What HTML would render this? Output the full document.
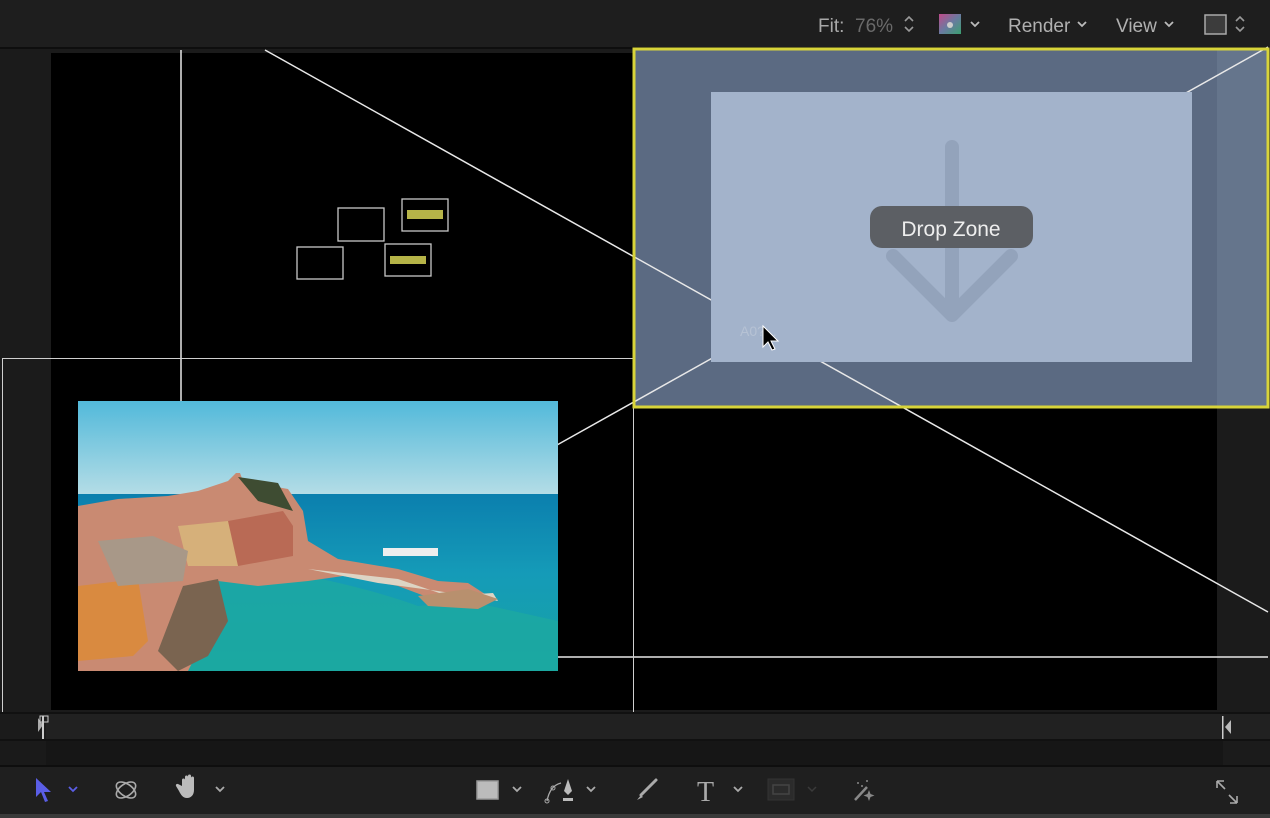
<!DOCTYPE html>
<html><head><meta charset="utf-8"><style>
html,body{margin:0;padding:0;background:#1e1e1e;width:1270px;height:818px;overflow:hidden;font-family:"Liberation Sans",sans-serif}
</style></head><body>
<svg width="1270" height="818" viewBox="0 0 1270 818" xmlns="http://www.w3.org/2000/svg" style="position:absolute;left:0;top:0">
<defs>
<linearGradient id="sky" x1="0" y1="0" x2="0" y2="1"><stop offset="0" stop-color="#52b9da"/><stop offset="1" stop-color="#b5dde6"/></linearGradient>
<linearGradient id="sea" x1="0" y1="0" x2="0" y2="1"><stop offset="0" stop-color="#0b7fae"/><stop offset="0.45" stop-color="#159bb8"/><stop offset="1" stop-color="#16a3a3"/></linearGradient>
<linearGradient id="pal" x1="0" y1="0" x2="1" y2="1"><stop offset="0" stop-color="#c04a8a"/><stop offset="0.5" stop-color="#6a7aa0"/><stop offset="1" stop-color="#3aa070"/></linearGradient>
</defs>
<rect x="0" y="0" width="1270" height="47" fill="#1e1e1e"/>
<rect x="0" y="47" width="1270" height="2" fill="#0e0e0e"/>
<text x="818" y="32" font-size="19" fill="#a8a8a8">Fit:</text>
<text x="855" y="32" font-size="19" fill="#6a6a6a">76%</text>
<path d="M905 21l4-4 4 4M905 27l4 4 4-4" stroke="#999" stroke-width="1.6" fill="none"/>
<rect x="939" y="14" width="22" height="20" fill="url(#pal)"/>
<circle cx="950" cy="25" r="3" fill="#ccc"/>
<path d="M971 22l4 4 4-4" stroke="#bbb" stroke-width="1.8" fill="none"/>
<text x="1008" y="32" font-size="19" fill="#b0b0b0">Render</text>
<path d="M1078 22l4 4 4-4" stroke="#bbb" stroke-width="1.8" fill="none"/>
<text x="1116" y="32" font-size="19" fill="#b0b0b0">View</text>
<path d="M1165 22l4 4 4-4" stroke="#bbb" stroke-width="1.8" fill="none"/>
<rect x="1205" y="15" width="21" height="19" fill="#3c3c3c" stroke="#aaa" stroke-width="1.5"/>
<path d="M1236 21l4-4 4 4M1236 27l4 4 4-4" stroke="#999" stroke-width="1.6" fill="none"/>
<rect x="0" y="49" width="1270" height="663" fill="#1b1b1b"/>
<rect x="51" y="53" width="1166" height="657" fill="#000"/>
<rect x="634" y="49" width="634" height="358" fill="#5b6a82"/>
<rect x="1217" y="49" width="51" height="358" fill="#65758c"/>
<g stroke="#e8e8e8" stroke-width="1.5" fill="none">
<line x1="181" y1="50" x2="181" y2="401"/>
<line x1="265" y1="50" x2="1268" y2="612"/>
<line x1="557" y1="445" x2="1268" y2="47"/>
<line x1="557" y1="657" x2="1268" y2="657"/>
</g>
<rect x="2.5" y="358.5" width="631" height="354" fill="none" stroke="#cfcfcf" stroke-width="1"/>
<rect x="634" y="49" width="634" height="358" fill="none" stroke="#d8d43a" stroke-width="3"/>
<rect x="711" y="92" width="481" height="270" fill="#a3b3cb"/>
<path d="M952 147V312M893 256l59 59 59-59" stroke="#93a3bb" stroke-width="14" stroke-linecap="round" stroke-linejoin="round" fill="none"/>
<rect x="870" y="206" width="163" height="42" rx="12" fill="#5c5f64"/>
<text x="951" y="236" font-size="21" fill="#eee" text-anchor="middle">Drop Zone</text>
<text x="740" y="336" font-size="14" fill="#b6c2d4">A0?...</text>
<path d="M763 326v21l5-5 4 8 3-1-4-8h7z" fill="#000" stroke="#fff" stroke-width="1"/>
<g fill="none" stroke="#c8c8c8" stroke-width="1.3">
<rect x="338" y="208" width="46" height="33"/>
<rect x="402" y="199" width="46" height="32"/>
<rect x="385" y="244" width="46" height="32"/>
<rect x="297" y="247" width="46" height="32"/>
</g>
<rect x="407" y="210" width="36" height="9" fill="#b6b448"/>
<rect x="390" y="256" width="36" height="8" fill="#b6b448"/>
<svg x="78" y="401" width="480" height="270" viewBox="0 0 480 270">
<rect width="480" height="94" fill="url(#sky)"/>
<rect y="93" width="480" height="177" fill="url(#sea)"/>
<path d="M110 175 Q170 165 230 175 Q300 190 340 205 L390 200 L480 220 L480 270 L100 270Z" fill="#1daaa0" opacity="0.75"/>
<path d="M0 105 L40 98 L90 95 L120 90 L150 80 L158 72 L162 72 L165 80 L210 88 L225 110 L230 140 L260 158 L320 168 L360 180 L390 182 L410 195 L400 205 L360 200 L320 185 L265 175 L230 180 L180 185 L140 180 L130 210 L125 240 L110 270 L0 270Z" fill="#c98a72"/>
<path d="M150 120 L205 110 L215 125 L215 155 L160 165 L150 140Z" fill="#b96a55"/>
<path d="M100 125 L150 120 L160 165 L110 165Z" fill="#d6b07a"/>
<path d="M0 185 L60 178 L70 240 L55 255 L0 260Z" fill="#d98a40"/>
<path d="M20 140 L75 135 L110 150 L105 180 L40 185Z" fill="#a89888"/>
<path d="M160 76 L200 82 L215 110 L180 100Z" fill="#3e4c32"/>
<path d="M105 185 L140 178 L150 220 L130 255 L100 270 L80 250Z" fill="#7a6450"/>
<path d="M230 168 L320 178 L370 195 L415 192 L420 200 L360 190 L300 182Z" fill="#ddd4c4"/>
<path d="M340 195 L390 188 L420 198 L400 208 L350 205Z" fill="#b8906e"/>
<rect x="305" y="147" width="55" height="8" fill="#eee"/>
</svg>
<rect x="0" y="712" width="1270" height="2" fill="#111"/>
<rect x="0" y="714" width="1270" height="25" fill="#212121"/>
<rect x="0" y="714" width="46" height="25" fill="#1b1b1b"/>
<rect x="0" y="739" width="1270" height="2" fill="#111"/>
<rect x="0" y="741" width="1270" height="24" fill="#161616"/>
<rect x="0" y="741" width="46" height="24" fill="#1a1a1a"/>
<rect x="1223" y="741" width="47" height="24" fill="#1b1b1b"/>
<path d="M38 718l5 7-5 7z" fill="#aaa"/>
<rect x="42" y="716" width="2" height="23" fill="#ccc"/>
<rect x="40" y="716" width="8" height="6" fill="none" stroke="#ccc" stroke-width="1"/>
<rect x="1222" y="716" width="1.5" height="23" fill="#ccc"/>
<path d="M1231 720l-6 7 6 7z" fill="#bbb"/>
<rect x="0" y="765" width="1270" height="2" fill="#0e0e0e"/>
<rect x="0" y="767" width="1270" height="47" fill="#1f1f1f"/>
<rect x="0" y="814" width="1270" height="4" fill="#3a3a3a"/>
<path d="M36 778l0 19 5-5 4 10 3-1-4-9 7 0z" fill="#5a5ee6"/>
<path d="M69 787l4 4 4-4" stroke="#5a5ee6" stroke-width="1.8" fill="none"/>
<g stroke="#aaa" stroke-width="1.6" fill="none"><ellipse cx="126" cy="790" rx="11" ry="6" transform="rotate(-35 126 790)"/><ellipse cx="126" cy="790" rx="11" ry="6" transform="rotate(35 126 790)"/></g>
<path d="M182 786l0-6a1.5 1.5 0 013 0v8l0-11a1.5 1.5 0 013 0v10l0-11a1.5 1.5 0 013 0v11l0-9a1.5 1.5 0 013 0v12c0 5-3 8-7 8s-6-3-8-7l-3-5a1.5 1.5 0 012-2z" fill="#bbb"/>
<path d="M216 787l4 4 4-4" stroke="#aaa" stroke-width="1.8" fill="none"/>
<rect x="477" y="781" width="21" height="18" fill="#bbb" stroke="#999" stroke-width="1.5"/>
<path d="M513 787l4 4 4-4" stroke="#aaa" stroke-width="1.8" fill="none"/>
<path d="M547 801c2-10 6-16 14-18" stroke="#aaa" stroke-width="1.3" fill="none"/>
<circle cx="547" cy="801" r="2" fill="none" stroke="#aaa"/><circle cx="553" cy="788" r="2" fill="none" stroke="#aaa"/>
<path d="M568 779l-4 12 4 4 4-4z M563 798h10v3h-10z" fill="#bbb"/>
<path d="M587 787l4 4 4-4" stroke="#aaa" stroke-width="1.8" fill="none"/>
<path d="M656 780l-15 15" stroke="#aaa" stroke-width="3" stroke-linecap="round"/>
<path d="M637 800l4-5 2 2z" fill="#aaa"/>
<text x="697" y="801" font-size="28" font-family="Liberation Serif,serif" fill="#aaa">T</text>
<path d="M734 787l4 4 4-4" stroke="#aaa" stroke-width="1.8" fill="none"/>
<rect x="768" y="779" width="26" height="21" fill="#2b2b2b" stroke="#333" stroke-width="1"/>
<rect x="773" y="785" width="16" height="9" fill="none" stroke="#444" stroke-width="1.5"/>
<path d="M808 787l4 4 4-4" stroke="#3a3a3a" stroke-width="1.5" fill="none"/>
<path d="M855 800l12-13" stroke="#888" stroke-width="2.5"/>
<path d="M869 790l1.5 4 4 1.5-4 1.5-1.5 4-1.5-4-4-1.5 4-1.5z" fill="#888"/>
<circle cx="858" cy="783" r="1" fill="#888"/><circle cx="862" cy="786" r="1" fill="#888"/><circle cx="867" cy="781" r="1" fill="#888"/>
<path d="M1217 781v7M1217 781h7M1217 781l8 8M1237 803v-7M1237 803h-7M1237 803l-8-8" stroke="#aaa" stroke-width="1.6" fill="none"/>
</svg>
</body></html>
